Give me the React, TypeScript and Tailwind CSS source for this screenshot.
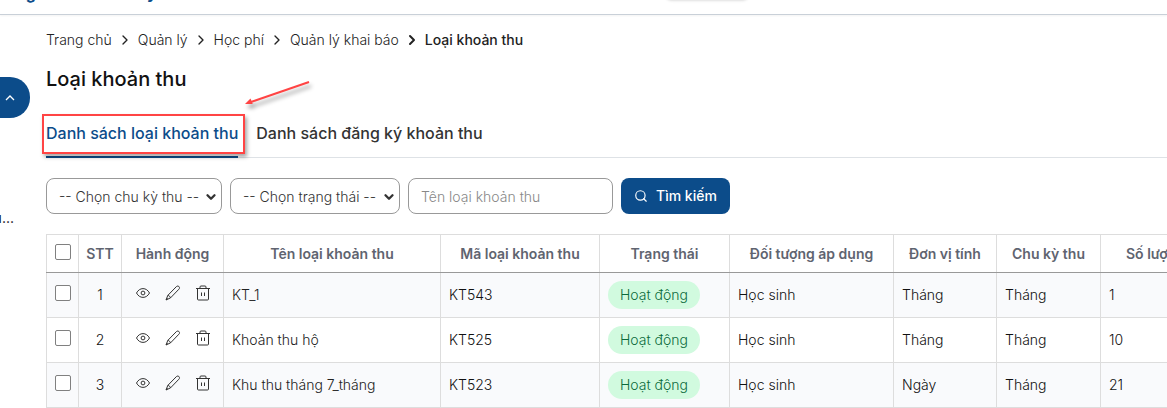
import { ChevronRight, ChevronDown, Search } from "lucide-react";

const crumbs = ["Trang chủ", "Quản lý", "Học phí", "Quản lý khai báo"];

const rows = [
  { name: "KT_1", code: "KT543", unit: "Tháng", cycle: "Tháng", count: 1 },
  { name: "Khoản thu hộ", code: "KT525", unit: "Tháng", cycle: "Tháng", count: 10 },
  { name: "Khu thu tháng 7_tháng", code: "KT523", unit: "Ngày", cycle: "Tháng", count: 21 },
];

const columns = [
  { label: "STT", width: "w-[43px]" },
  { label: "Hành động", width: "w-[102px]" },
  { label: "Tên loại khoản thu", width: "w-[217px]" },
  { label: "Mã loại khoản thu", width: "w-[159px]" },
  { label: "Trạng thái", width: "w-[130px]" },
  { label: "Đối tượng áp dụng", width: "w-[164px]" },
  { label: "Đơn vị tính", width: "w-[103px]" },
  { label: "Chu kỳ thu", width: "w-[104px]" },
  { label: "Số lượng", width: "w-[110px]" },
];

function EyeIcon() {
  return (
    <svg className="size-4" viewBox="0 0 16 16" fill="none" stroke="currentColor">
      <path d="M1.500 8C3 5.200 5.300 3.600 8 3.600S13 5.200 14.500 8C13 10.800 10.700 12.400 8 12.400S3 10.800 1.500 8Z" />
      <circle cx="8" cy="8" r="1.900" />
    </svg>
  );
}

function PencilIcon() {
  return (
    <svg className="size-4" viewBox="0 0 16 16" fill="none" stroke="currentColor" strokeLinejoin="round">
      <path d="M11.400 1.600a1.750 1.750 0 0 1 2.900.500c.400.800.200 1.500-.400 2.100L5.500 12.900 1 15l1.800-4.600Z" />
      <path d="M2.800 10.400c1.500.300 2.300 1.100 2.700 2.500M1 15l1.600-1.700" />
    </svg>
  );
}

function TrashIcon() {
  return (
    <svg className="size-4" viewBox="0 0 16 16" fill="none" stroke="currentColor">
      <path d="M1 3.500h14M5 3.500V2q0-1 1-1h4q1 0 1 1v1.500M2.500 3.500v10.500q0 1 1 1h9q1 0 1-1V3.500M6.500 7.500v3.500M9.500 7.500v3.500" />
    </svg>
  );
}

function Select({ label, width }: { label: string; width: string }) {
  return (
    <div className={`relative h-9 ${width}`}>
      <select
        aria-label={label}
        className="h-full w-full appearance-none rounded-lg border border-[#999] bg-white pt-0.5 pr-4 pl-3 text-sm font-light text-[#333]"
      >
        <option>{`-- ${label} --`}</option>
      </select>
      <ChevronDown className="pointer-events-none absolute top-3 right-1 size-3.5 text-[#333]" strokeWidth={4} />
    </div>
  );
}

function Check({ label }: { label: string }) {
  return (
    <input
      type="checkbox"
      aria-label={label}
      className="block size-4 appearance-none rounded-xs border border-[#808080] bg-white"
    />
  );
}

export default function App() {
  return (
    <div className="overflow-hidden bg-white font-['Inter','Noto_Sans',sans-serif] text-sm font-light text-[#111]">
      <header className="flex h-[15px] items-end overflow-hidden border-b border-[#c9d0d8] pb-[11px] shadow-xs">
        <span className="-ml-5 flex-1 text-base leading-5 font-bold text-[#0c4c8a]">Trường THCS Hà An Lý</span>
        <span className="mr-[417px] mb-[3px] h-8 w-[86px] rounded-lg bg-white shadow" />
      </header>
      <div className="flex items-start">
        <aside className="w-[46px] shrink-0 overflow-hidden pt-[62px]">
          <button
            aria-label="Thu gọn"
            className="flex h-[41px] w-[30px] items-center rounded-r-[20px] bg-[#0c4c8a] pl-1 text-white"
          >
            <svg className="size-3" viewBox="0 0 12 12" fill="none" stroke="currentColor" strokeWidth="1.300">
              <path d="M2 8l4-4 4 4" />
            </svg>
          </button>
          <a href="#" className="mt-[90px] flex w-[14px] justify-end leading-5 font-normal">
            Thu...
          </a>
        </aside>
        <main className="min-w-0 flex-1 pt-[15px]">
          <nav aria-label="Breadcrumb" className="flex items-center gap-[5px] leading-5 text-[#222]">
            {crumbs.map((crumb, i) => (
              <span key={crumb} className="flex items-center gap-[5px]">
                <a href="#">{crumb}</a>
                <ChevronRight
                  className="size-4"
                  strokeWidth={i === crumbs.length - 1 ? 3 : 2}
                />
              </span>
            ))}
            <span className="font-medium">Loại khoản thu</span>
          </nav>
          <h1 className="mt-[15px] text-xl leading-7 font-medium">Loại khoản thu</h1>
          <div className="relative mt-4 flex gap-[18px] border-b border-[#dee2e6] text-base font-medium">
            <button className="relative -mb-px h-[49px] border-b-2 border-[#0c4c8a] text-[#0c4c8a]">
              Danh sách loại khoản thu
              <span className="absolute top-[5px] -left-1 h-10 w-[203px] border-2 border-[#f44] shadow-[2px_3px_4px_rgba(0,0,0,0.35)]" />
            </button>
            <button className="-mb-px h-[49px] border-b-2 border-transparent text-[#333]">Danh sách đăng ký khoản thu</button>
            <svg className="absolute -top-7 left-[197px] h-8 w-[72px] drop-shadow-[2px_4px_2px_rgba(0,0,0,0.4)]" viewBox="0 0 72 32">
              <path d="M66 1L8 21" stroke="#f44" strokeWidth="2" />
              <path d="M2 23l5.500-5.500 2.200 5.600Z" fill="#f44" />
            </svg>
          </div>
          <form className="mt-5 flex gap-2">
            <Select label="Chọn chu kỳ thu" width="w-[176px]" />
            <Select label="Chọn trạng thái" width="w-[170px]" />
            <input
              aria-label="Tên loại khoản thu"
              placeholder="Tên loại khoản thu"
              className="h-9 w-[205px] rounded-lg border border-[#999] px-3 placeholder:text-[#888]"
            />
            <button type="button" className="flex h-9 items-center gap-2 rounded-lg bg-[#0c4c8a] px-[13px] font-medium text-white">
              <Search className="size-3.5" />
              Tìm kiếm
            </button>
          </form>
          <table className="mt-5 w-[1165px] table-fixed border-collapse text-left [&_td]:border [&_td]:border-[#ddd] [&_th]:border [&_th]:border-[#ddd] [&_th]:border-b-[#999]">
            <thead>
              <tr className="h-[38px] text-center text-[#5f6470]">
                <th className="w-8 pb-1 pl-2">
                  <Check label="Chọn tất cả" />
                </th>
                {columns.map((c) => (
                  <th key={c.label} className={`${c.width} font-semibold whitespace-nowrap`}>
                    {c.label}
                  </th>
                ))}
              </tr>
            </thead>
            <tbody>
              {rows.map((r, i) => (
                <tr key={r.code} className="h-[45px] odd:bg-[#f9fafc]">
                  <td className="pb-1 pl-2">
                    <Check label={`Chọn ${r.name}`} />
                  </td>
                  <td className="text-center">{i + 1}</td>
                  <td className="pb-1">
                    <div className="flex justify-center gap-3.5 text-[#333]">
                      <button aria-label="Xem"><EyeIcon /></button>
                      <button aria-label="Sửa"><PencilIcon /></button>
                      <button aria-label="Xóa"><TrashIcon /></button>
                    </div>
                  </td>
                  <td className="px-2 text-[#222]">{r.name}</td>
                  <td className="px-2">{r.code}</td>
                  <td className="px-2">
                    <span className="inline-block rounded-full bg-[#d1fadf] px-3 py-1 leading-5 text-[#0b6b3c]">Hoạt động</span>
                  </td>
                  <td className="px-2">Học sinh</td>
                  <td className="px-2">{r.unit}</td>
                  <td className="px-2">{r.cycle}</td>
                  <td className="px-2">{r.count}</td>
                </tr>
              ))}
            </tbody>
          </table>
        </main>
      </div>
    </div>
  );
}
